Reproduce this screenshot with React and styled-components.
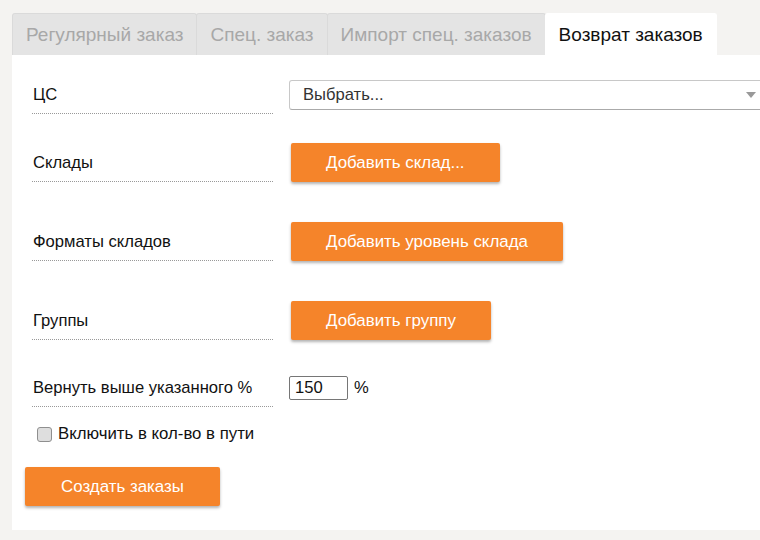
import React, { useState } from 'react';
import styled, { createGlobalStyle } from 'styled-components';

const GlobalStyle = createGlobalStyle`
    html, body {
        margin: 0;
        padding: 0;
        overflow: hidden;
        background: #f4f3f1;
        font-family: "Liberation Sans", Arial, sans-serif;
    }
`;

const Page = styled.div`
    width: 800px;
    padding: 13px 0 10px 12px;
`;

const Tabs = styled.div`
    display: flex;
    height: 42px;
`;

const Tab = styled.div`
    display: flex;
    align-items: center;
    padding: 0 13px;
    font-size: 19px;
    color: ${p => p.active ? '#111' : '#a8a8a8'};
    background: ${p => p.active ? '#fff' : '#e4e4e4'};
    border: 1px solid ${p => p.active ? '#fff' : '#dadada'};
    border-bottom: none;
    border-radius: 3px 3px 0 0;
    margin-right: ${p => p.active ? '0' : '-1px'};
    cursor: pointer;
`;

const Panel = styled.div`
    background: #fff;
    padding: 21px 0 24px 20px;
`;

const Row = styled.div`
    display: flex;
    align-items: center;
    margin-top: ${p => p.mt || 0}px;
`;

const Label = styled.div`
    width: 240px;
    flex-shrink: 0;
    font-size: 16.6px;
    line-height: 20px;
    color: #111;
    padding: 9px 0 8px 1px;
    border-bottom: 1px dotted #999;
    margin-right: 16px;
`;

const Select = styled.div`
    position: relative;
    width: 500px;
    height: 30px;
    box-sizing: border-box;
    display: flex;
    align-items: center;
    padding-left: 13px;
    font-size: 16.6px;
    color: #333;
    border: 1px solid #c8c8c8;
    border-bottom-color: #aaa;
    border-radius: 3px 0 0 3px;

    &::after {
        content: '';
        position: absolute;
        left: 456px;
        top: 11px;
        border-left: 5px solid transparent;
        border-right: 5px solid transparent;
        border-top: 6px solid #999;
    }
`;

const OrangeButton = styled.button`
    height: 39px;
    padding: 0 ${p => p.px || 35}px;
    margin-left: ${p => p.ml || 0}px;
    background: #f5842a;
    color: #fff;
    border: none;
    border-radius: 2px;
    box-shadow: 0 2px 3px rgba(0, 0, 0, 0.3);
    font-family: "Liberation Sans", Arial, sans-serif;
    font-size: 16.9px;
    cursor: pointer;
`;

const Percent = styled.div`
    display: flex;
    align-items: center;
    gap: 6px;
    font-size: 16.6px;
    color: #111;
`;

const NumberInput = styled.input`
    width: 59px;
    height: 24px;
    box-sizing: border-box;
    border: 1px solid #767676;
    border-radius: 2px;
    padding: 0 5px;
    font-family: "Liberation Sans", Arial, sans-serif;
    font-size: 16.6px;
    color: #111;
    outline: none;
`;

const CheckRow = styled.label`
    display: flex;
    align-items: center;
    gap: 6px;
    margin: 17px 0 0 5px;
    font-size: 16.8px;
    color: #111;
    cursor: pointer;
`;

const Box = styled.span`
    width: 13px;
    height: 13px;
    border: 1px solid #8f8f8f;
    border-radius: 3px;
    background: #dedede;
`;

const Footer = styled.div`
    margin: 23px 0 0 -7px;
`;

export default function App() {
    const [value, setValue] = useState('150');

    return (
        <Page>
            <GlobalStyle />
            <Tabs>
                <Tab>Регулярный заказ</Tab>
                <Tab>Спец. заказ</Tab>
                <Tab>Импорт спец. заказов</Tab>
                <Tab active>Возврат заказов</Tab>
            </Tabs>
            <Panel>
                <Row>
                    <Label>ЦС</Label>
                    <Select>Выбрать...</Select>
                </Row>
                <Row mt={29}>
                    <Label>Склады</Label>
                    <OrangeButton ml={2}>Добавить склад...</OrangeButton>
                </Row>
                <Row mt={40}>
                    <Label>Форматы складов</Label>
                    <OrangeButton ml={2}>Добавить уровень склада</OrangeButton>
                </Row>
                <Row mt={40}>
                    <Label>Группы</Label>
                    <OrangeButton ml={2}>Добавить группу</OrangeButton>
                </Row>
                <Row mt={29}>
                    <Label>Вернуть выше указанного %</Label>
                    <Percent>
                        <NumberInput value={value} onChange={e => setValue(e.target.value)} />
                        %
                    </Percent>
                </Row>
                <CheckRow>
                    <Box />
                    Включить в кол-во в пути
                </CheckRow>
                <Footer>
                    <OrangeButton px={36}>Создать заказы</OrangeButton>
                </Footer>
            </Panel>
        </Page>
    );
}
